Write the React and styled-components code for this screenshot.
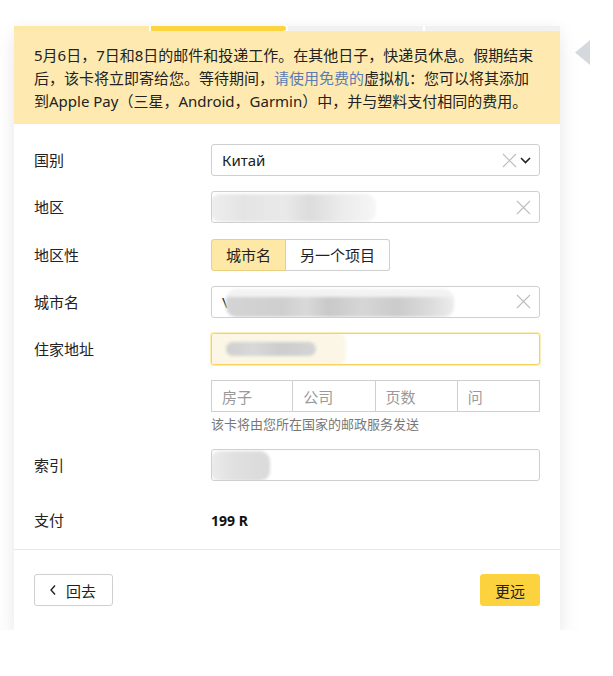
import React from 'react';
import styled, { createGlobalStyle } from 'styled-components';

const GlobalStyle = createGlobalStyle`
  body {
    margin: 0;
    background: #fff;
    font-family: "Noto Sans", "Noto Sans CJK SC", sans-serif;
    color: #222;
  }
`;

const Page = styled.div`
  display: flex;
  align-items: flex-start;
  padding: 26px 0 0 14px;
`;

const Card = styled.div`
  width: 546px;
  background: #fff;
  box-shadow: 0 10px 22px rgba(0, 0, 0, 0.08), 0 0 12px rgba(0, 0, 0, 0.03);
`;

const Steps = styled.div`
  display: flex;
  gap: 2px;
  height: 5px;
`;

const Step = styled.div`
  flex: 1;
  background: ${p => p.$state === 'done' ? '#fde8a8' : p.$state === 'active' ? '#fcd440' : '#f1f1f1'};
  border-radius: ${p => p.$state === 'active' ? '0 3px 3px 0' : '0'};
`;

const Notice = styled.div`
  background: #feeab0;
  padding: 13px 20px 11px 20px;
  font-size: 15px;
  line-height: 23px;
  color: #222;
`;

const Link = styled.span`
  color: #5a7db5;
`;

const Form = styled.div`
  display: flex;
  flex-direction: column;
  gap: 15.3px;
  padding: 20px 20px 13px 20px;
`;

const Row = styled.div`
  display: grid;
  grid-template-columns: 177px 1fr;
  align-items: ${p => p.$top ? 'start' : 'center'};
  min-height: 32px;
  margin-top: ${p => p.$push || 0}px;
`;

const Label = styled.div`
  font-size: 15px;
  line-height: 32px;
  color: #222;
`;

const Field = styled.div`
  position: relative;
  display: flex;
  align-items: center;
  height: 32px;
  box-sizing: border-box;
  border: 1px solid ${p => p.$focus ? '#f7d35e' : '#cfcfcf'};
  box-shadow: ${p => p.$focus ? '0 0 0 1px rgba(248, 212, 90, 0.45)' : 'none'};
  border-radius: 3px;
  padding: 0 8px 0 10px;
  font-size: 15px;
  background: #fff;
  overflow: hidden;
`;

const Value = styled.span`
  flex: 1;
  color: #222;
`;

const Blur = styled.div`
  position: absolute;
  top: ${p => p.$top}px;
  left: ${p => p.$left}px;
  width: ${p => p.$w}px;
  height: ${p => p.$h}px;
  background: ${p => p.$bg};
  filter: blur(1.5px);
  border-radius: 10px;
`;

const Icons = styled.div`
  display: flex;
  align-items: center;
  gap: 3px;
`;

const Toggle = styled.div`
  display: flex;
`;

const ToggleItem = styled.div`
  height: 32px;
  box-sizing: border-box;
  padding: 0 14px;
  display: flex;
  align-items: center;
  font-size: 15px;
  background: ${p => p.$on ? '#fee8a6' : '#fff'};
  border: 1px solid ${p => p.$on ? '#e9cf80' : '#cfcfcf'};
  border-left-width: ${p => p.$on ? '1px' : '0'};
  border-radius: ${p => p.$on ? '3px 0 0 3px' : '0 3px 3px 0'};
`;

const Parts = styled.div`
  display: grid;
  grid-template-columns: repeat(4, 1fr);
`;

const Part = styled.div`
  height: 32px;
  box-sizing: border-box;
  border: 1px solid #cfcfcf;
  border-left-width: ${p => p.$first ? '1px' : '0'};
  padding-left: 10px;
  display: flex;
  align-items: center;
  font-size: 15px;
  color: #9a9a9a;
`;

const Hint = styled.div`
  margin-top: 4px;
  font-size: 13px;
  line-height: 17px;
  color: #777;
`;

const Price = styled.div`
  font-size: 14px;
  font-weight: 700;
  color: #111;
`;

const Footer = styled.div`
  display: flex;
  justify-content: space-between;
  border-top: 1px solid #e8e8e8;
  padding: 24px 20px 24px 20px;
`;

const Button = styled.button`
  height: 32px;
  box-sizing: border-box;
  display: flex;
  align-items: center;
  gap: 9px;
  padding: ${p => p.$primary ? '0 14px' : '0 16px 0 14px'};
  font-family: inherit;
  font-size: 15px;
  color: #222;
  background: ${p => p.$primary ? '#fdd23f' : '#fff'};
  border: 1px solid ${p => p.$primary ? '#fdd23f' : '#cfcfcf'};
  border-radius: 3px;
`;

const Side = styled.div`
  padding: 14px 0 0 15px;
`;

const Cross = () => (
  <svg width="15" height="15" viewBox="0 0 15 15">
    <path d="M1 1 L14 14 M14 1 L1 14" stroke="#bdbdbd" strokeWidth="1.1" fill="none" />
  </svg>
);

const Chevron = ({ dir }) => (
  dir === 'left' ? (
    <svg width="8" height="12" viewBox="0 0 8 12">
      <path d="M6 1.5 L2 6 L6 10.5" stroke="#222" strokeWidth="1.4" fill="none" />
    </svg>
  ) : (
    <svg width="11" height="7" viewBox="0 0 11 7">
      <path d="M1 1 L5.5 5.5 L10 1" stroke="#222" strokeWidth="1.6" fill="none" />
    </svg>
  )
);

export default function App() {
  return (
    <>
      <GlobalStyle />
      <Page>
        <Card>
          <Steps>
            <Step $state="done" />
            <Step $state="active" />
            <Step />
            <Step />
          </Steps>
          <Notice>
            5月6日，7日和8日的邮件和投递工作。在其他日子，快递员休息。假期结束<br />
            后，该卡将立即寄给您。等待期间，<Link>请使用免费的</Link>虚拟机：您可以将其添加<br />
            到Apple Pay（三星，Android，Garmin）中，并与塑料支付相同的费用。
          </Notice>
          <Form>
            <Row>
              <Label>国别</Label>
              <Field>
                <Value>Китай</Value>
                <Icons><Cross /><Chevron /></Icons>
              </Field>
            </Row>
            <Row>
              <Label>地区</Label>
              <Field>
                <Blur $top={2} $left={-2} $w={166} $h={28} $bg="linear-gradient(90deg, #eee 0%, #e4e4e4 20%, #e9e9e9 45%, #dcdcdc 60%, #ececec 80%, #f6f6f6 100%)" />
                <Value />
                <Cross />
              </Field>
            </Row>
            <Row>
              <Label>地区性</Label>
              <Toggle>
                <ToggleItem $on>城市名</ToggleItem>
                <ToggleItem>另一个项目</ToggleItem>
              </Toggle>
            </Row>
            <Row>
              <Label>城市名</Label>
              <Field>
                <Value>\</Value>
                <Blur $top={2} $left={14} $w={228} $h={28} $bg="linear-gradient(180deg, #f2f2f2 0%, #f2f2f2 30%, transparent 30%), linear-gradient(90deg, #d4d4d4 0%, #cfcfcf 25%, #d9d9d9 35%, #c9c9c9 45%, #d6d6d6 60%, #cbcbcb 75%, #dcdcdc 90%, #ededed 100%)" />
                <Cross />
              </Field>
            </Row>
            <Row>
              <Label>住家地址</Label>
              <Field $focus>
                <Blur $top={-2} $left={-4} $w={138} $h={34} $bg="#fbf6e6" />
                <Blur $top={8} $left={14} $w={90} $h={14} $bg="linear-gradient(90deg, #cfcfcf 0%, #d8d8d8 30%, #cdcdcd 60%, #d4d4d4 100%)" />
                <Value />
              </Field>
            </Row>
            <Row $top>
              <Label />
              <div>
                <Parts>
                  <Part $first>房子</Part>
                  <Part>公司</Part>
                  <Part>页数</Part>
                  <Part>问</Part>
                </Parts>
                <Hint>该卡将由您所在国家的邮政服务发送</Hint>
              </div>
            </Row>
            <Row>
              <Label>索引</Label>
              <Field>
                <Blur $top={1} $left={-2} $w={60} $h={30} $bg="linear-gradient(90deg, #ececec 0%, #e0e0e0 40%, #dadada 100%)" />
                <Value />
              </Field>
            </Row>
            <Row $push={8}>
              <Label>支付</Label>
              <Price>199 R</Price>
            </Row>
          </Form>
          <Footer>
            <Button><Chevron dir="left" />回去</Button>
            <Button $primary>更远</Button>
          </Footer>
        </Card>
        <Side>
          <svg width="15" height="25" viewBox="0 0 15 25">
            <path d="M15 0 L0 12.5 L15 25 Z" fill="#d5d9de" />
          </svg>
        </Side>
      </Page>
    </>
  );
}
